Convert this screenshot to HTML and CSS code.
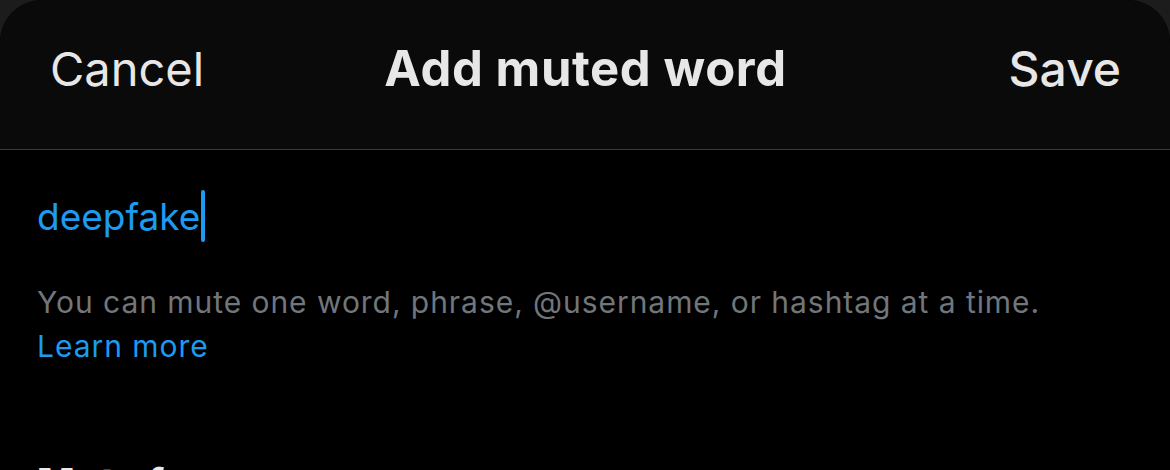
FILE: index.html
```html
<!DOCTYPE html>
<html lang="en">
  <head>
    <meta charset="UTF-8" />
    <meta name="viewport" content="width=device-width, initial-scale=1.0" />
    <title>Add muted word</title>
    <link rel="stylesheet" href="styles.css">
  </head>
  <body>
    <div class="sheet">
      <div class="header">
        <a class="cancel">Cancel</a>
        <h1>Add muted word</h1>
        <a class="save">Save</a>
      </div>

      <div class="content">
        <div class="field">
          <span class="word">deepfake</span><span class="caret"></span>
        </div>

        <p class="hint">
          You can mute one word, phrase, @username, or hashtag at a time.
          <br />
          <a class="learn">Learn more</a>
        </p>

        <h2>Mute from</h2>
      </div>
    </div>
  </body>
</html>
```

FILE: styles.css
```css
* {
  margin: 0;
  padding: 0;
  box-sizing: border-box;
  font-family: Inter, "Liberation Sans", sans-serif;
}

body {
  background: #1c1c1d;
  height: 470px;
  overflow: hidden;
}

.sheet {
  background: #000;
  border-radius: 42px 42px 0 0;
  overflow: hidden;
  height: 100%;
}

.header {
  display: grid;
  grid-template-columns: 1fr auto 1fr;
  align-items: center;
  height: 150px;
  padding: 0 49px 12px 50px;
  background: #0a0a0a;
  border-bottom: 1px solid #3a3a3a;
  color: #e7e7e7;
}

.cancel {
  font-size: 47px;
  font-weight: 400;
}

.header h1 {
  font-size: 49px;
  font-weight: 700;
  letter-spacing: 0.6px;
}

.save {
  justify-self: end;
  font-size: 48px;
  font-weight: 500;
}

.content {
  padding: 40px 37px 0;
}

.field {
  display: flex;
  align-items: center;
  height: 52px;
}

.word {
  color: #1d9bf0;
  font-size: 37px;
}

.caret {
  width: 4px;
  height: 52px;
  margin-left: 1px;
  border-radius: 2px;
  background: #1d9bf0;
}

.hint {
  margin-top: 38px;
  color: #71767b;
  font-size: 30px;
  line-height: 44px;
  letter-spacing: 0.95px;
}

.learn {
  color: #1d9bf0;
}

h2 {
  margin-top: 90px;
  color: #e7e9ea;
  font-size: 40px;
  font-weight: 800;
}
```
